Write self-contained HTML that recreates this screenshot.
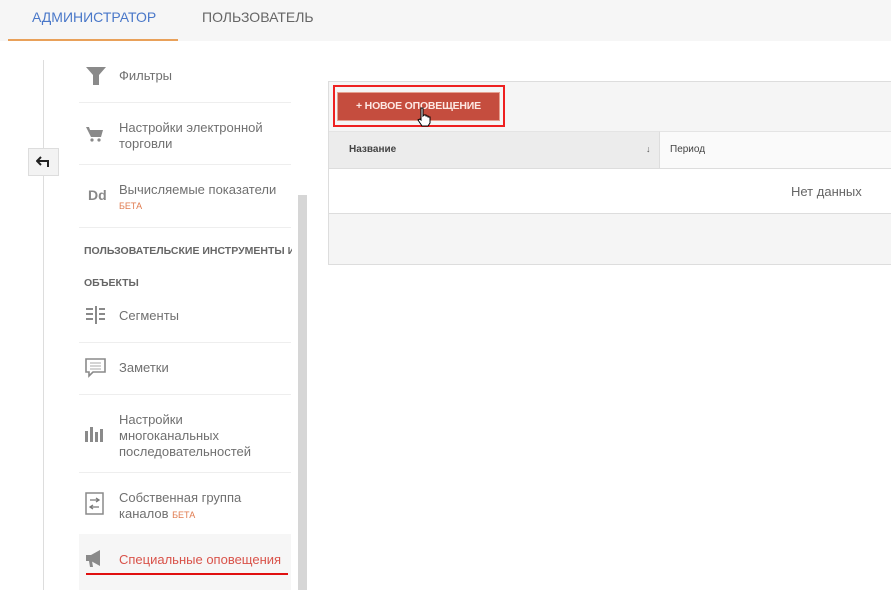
<!DOCTYPE html>
<html><head><meta charset="utf-8"><style>
*{margin:0;padding:0;box-sizing:border-box}
body{width:891px;height:590px;overflow:hidden;background:#fff;font-family:"Liberation Sans","Noto Sans CJK SC",sans-serif;position:relative;color:#555}
.a{position:absolute}
.top{left:0;top:0;width:891px;height:41px;background:#f6f6f6}
.tab{font-size:14px;top:9px}
.t{font-size:13px;color:#707070;line-height:16px}
.sep{height:1px;background:#eee;left:79px;width:212px}
.beta{font-size:9px;color:#e07b4f}
.ic{fill:#8a8a8a}
</style></head><body>
<div class="a top"></div>
<div class="a tab" style="left:32px;color:#4a78c9">АДМИНИСТРАТОР</div>
<div class="a tab" style="left:202px;color:#666">ПОЛЬЗОВАТЕЛЬ</div>
<div class="a" style="left:8px;top:39px;width:170px;height:2px;background:#e9a15a"></div>
<div class="a" style="left:43px;top:60px;width:1px;height:530px;background:#ddd"></div>
<div class="a" style="left:28px;top:148px;width:31px;height:28px;background:#f3f3f3;border:1px solid #ddd"></div>
<svg class="a" style="left:36px;top:155px" width="16" height="14"><path d="M2 6h10v6M5 2L1 6l4 4" fill="none" stroke="#222" stroke-width="2"/></svg>
<div class="a" style="left:298px;top:195px;width:9px;height:395px;background:#d6d6d6"></div>

<svg class="a" style="left:86px;top:66px" width="20" height="20"><path class="ic" d="M0 1h20l-7 8v10h-6V9z"/></svg>
<div class="a t" style="left:119px;top:68px">Фильтры</div>
<div class="a sep" style="top:102px"></div>
<svg class="a" style="left:86px;top:126px" width="18" height="18"><path class="ic" d="M0 1h3l1 3h13l-2 7H5z"/><circle class="ic" cx="6" cy="14" r="1.6"/><circle class="ic" cx="13" cy="14" r="1.6"/></svg>
<div class="a t" style="left:119px;top:120px">Настройки электронной<br>торговли</div>
<div class="a sep" style="top:164px"></div>
<div class="a" style="left:88px;top:187px;font-size:14px;font-weight:bold;color:#888">Dd</div>
<div class="a t" style="left:119px;top:182px">Вычисляемые показатели</div>
<div class="a beta" style="left:119px;top:201px">БЕТА</div>
<div class="a sep" style="top:227px"></div>
<div class="a" style="left:84px;top:245px;font-size:10.5px;font-weight:bold;color:#666;white-space:nowrap;width:208px;overflow:hidden">ПОЛЬЗОВАТЕЛЬСКИЕ ИНСТРУМЕНТЫ И</div>
<div class="a" style="left:84px;top:277px;font-size:10.5px;font-weight:bold;color:#666">ОБЪЕКТЫ</div>
<svg class="a" style="left:86px;top:306px" width="20" height="18"><g class="ic"><rect x="9" y="0" width="2" height="18"/><rect x="0" y="2" width="7" height="2"/><rect x="0" y="7" width="7" height="2"/><rect x="0" y="12" width="7" height="2"/><rect x="13" y="2" width="6" height="2"/><rect x="13" y="7" width="6" height="2"/><rect x="13" y="12" width="6" height="2"/></g></svg>
<div class="a t" style="left:119px;top:308px">Сегменты</div>
<div class="a sep" style="top:342px"></div>
<svg class="a" style="left:85px;top:358px" width="22" height="22"><path d="M1 1h19v13H8l-4 4v-4H1z" fill="none" stroke="#8a8a8a" stroke-width="1.6"/><path d="M5 5h11M5 8h11M5 11h11" stroke="#aaa"/></svg>
<div class="a t" style="left:119px;top:360px">Заметки</div>
<div class="a sep" style="top:394px"></div>
<svg class="a" style="left:85px;top:425px" width="20" height="18"><g class="ic"><rect x="0" y="6" width="3" height="11"/><rect x="5" y="2" width="3" height="15"/><rect x="10" y="7" width="3" height="10"/><rect x="15" y="4" width="3" height="13"/></g></svg>
<div class="a t" style="left:119px;top:412px">Настройки<br>многоканальных<br>последовательностей</div>
<div class="a sep" style="top:472px"></div>
<svg class="a" style="left:85px;top:492px" width="20" height="24"><rect x="1" y="1" width="17" height="21" fill="none" stroke="#8a8a8a" stroke-width="1.5"/><path d="M5 8h9M11 6l3 2-3 2M5 15h9M8 13l-3 2 3 2" fill="none" stroke="#777" stroke-width="1.3"/></svg>
<div class="a t" style="left:119px;top:490px">Собственная группа<br>каналов <span class="beta">БЕТА</span></div>
<div class="a" style="left:79px;top:534px;width:212px;height:56px;background:#f6f6f6"></div>
<svg class="a" style="left:86px;top:550px" width="20" height="18"><path class="ic" d="M0 5h5l9-5v16l-9-5H0z M3 11h3l1 6H4z"/></svg>
<div class="a t" style="left:119px;top:552px;color:#d9534a">Специальные оповещения</div>
<div class="a" style="left:86px;top:573px;width:202px;height:2px;background:#e01010"></div>

<div class="a" style="left:328px;top:81px;width:570px;height:184px;border:1px solid #ddd;background:#f5f5f5"></div>
<div class="a" style="left:329px;top:168px;width:570px;height:46px;background:#fff;border-top:1px solid #ddd;border-bottom:1px solid #ddd"></div>
<div class="a" style="left:329px;top:131px;width:331px;height:37px;background:#ececec;border-right:1px solid #ddd;border-top:1px solid #e4e4e4"></div>
<div class="a" style="left:660px;top:131px;width:240px;height:37px;background:#fafafa;border-top:1px solid #e4e4e4"></div>
<div class="a" style="left:349px;top:144px;font-size:10px;font-weight:bold;color:#444">Название</div>
<div class="a" style="left:646px;top:144px;font-size:9px;color:#555">↓</div>
<div class="a" style="left:670px;top:144px;font-size:10px;color:#444">Период</div>
<div class="a" style="left:791px;top:184px;font-size:13px;color:#666">Нет данных</div>
<div class="a" style="left:333px;top:85px;width:172px;height:42px;border:2px solid #ee2020"></div>
<div class="a" style="left:337px;top:92px;width:163px;height:29px;background:#c54d3e;border:1px solid #e5a090;font-size:10.5px;font-weight:bold;text-align:center;line-height:27px;color:#fde8e4;letter-spacing:-0.2px">+ НОВОЕ ОПОВЕЩЕНИЕ</div>
<svg class="a" style="left:417px;top:107px" width="14" height="20"><path d="M4 1h2v8l1-1h2v1h2v1h2v6l-2 3H5l-4-6 2-1 1 1z" fill="#fff" stroke="#000" stroke-width="1"/></svg>
</body></html>
